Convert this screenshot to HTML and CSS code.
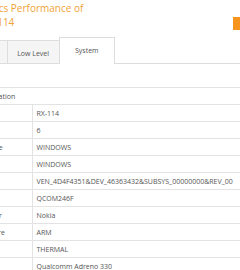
FILE: index.html
```html
<!DOCTYPE html>
<html lang="en">
<head>
<meta charset="UTF-8">
<meta name="viewport" content="width=device-width, initial-scale=1.0">
<title>RX-114 - System</title>
<link rel="stylesheet" href="styles.css">
</head>
<body>

<div class="page">
  <header class="top">
    <h1 class="title">
      <span class="title-line">Graphics Performance of</span>
      <span class="title-line second">RX-114</span>
    </h1>
    <a class="compare" href="#compare">Compare</a>
  </header>

  <nav class="tabs">
    <a class="tab" href="#high">High Level</a>
    <a class="tab" href="#low">Low Level</a>
    <a class="tab active" href="#system">System</a>
  </nav>

  <div class="panel">
    <table class="info">
      <tr class="head"><th colspan="2">Device Information</th></tr>
      <tr><td>Name</td><td>RX-114</td></tr>
      <tr><td>CPU cores</td><td>6</td></tr>
      <tr><td>Platform Type</td><td>WINDOWS</td></tr>
      <tr><td>OS</td><td>WINDOWS</td></tr>
      <tr><td>Device ID</td><td>VEN_4D4F4351&amp;DEV_46363432&amp;SUBSYS_00000000&amp;REV_00</td></tr>
      <tr><td>Model</td><td>QCOM246F</td></tr>
      <tr><td>Manufacturer</td><td>Nokia</td></tr>
      <tr><td>CPU Hardware</td><td>ARM</td></tr>
      <tr><td>Cooling</td><td>THERMAL</td></tr>
      <tr><td>GPU</td><td>Qualcomm Adreno 330</td></tr>
    </table>
  </div>
</div>

</body>
</html>
```

FILE: styles.css
```css
/* Basic reset */
* {
  margin: 0;
  padding: 0;
  box-sizing: border-box;
}

html,
body {
  overflow: hidden;
}

body {
  font-family: "Open Sans", Arial, sans-serif;
  font-size: 7px;
  color: #555;
  background: #fff;
}

/* Page is wider than the window and starts left of it */
.page {
  width: 344px;
  margin-left: -44px;
}

/* Title and compare button */
.top {
  display: flex;
  align-items: flex-start;
}

.title {
  font-size: 10px;
  font-weight: normal;
  line-height: 14px;
  color: #f0a236;
  padding: 1px 0 0 11px;
}

.title-line {
  display: block;
}

.title-line.second {
  padding-left: 15px;
}

.compare {
  margin-left: auto;
  margin-top: 17px;
  width: 67px;
  height: 13px;
  background: #f7941d;
  color: #fff;
  text-decoration: none;
  text-align: center;
  line-height: 13px;
}

/* Tabs */
.tabs {
  display: flex;
  align-items: flex-end;
  margin-top: 7px;
  margin-left: -3px;
  border-bottom: 1px solid #ddd;
}

.tab {
  display: block;
  height: 23px;
  padding: 3px 9.5px 0;
  line-height: 20px;
  border: 1px solid #ddd;
  border-bottom: 0;
  background: #f5f5f5;
  color: #555;
  text-decoration: none;
  margin-right: -1px;
}

.tab.active {
  height: 27px;
  padding: 0 15.5px;
  line-height: 26px;
  background: #fff;
  margin-bottom: -1px;
}

/* Table */
.panel {
  padding-top: 23px;
}

.info {
  width: 100%;
  border-collapse: collapse;
}

.info th,
.info td {
  height: 17px;
  padding: 0 4px;
  border-top: 1px solid #e3e3e3;
  text-align: left;
  font-weight: normal;
  white-space: nowrap;
}

.info th {
  padding-left: 0;
  text-indent: -3px;
}

.info td:first-child {
  width: 76px;
  padding-left: 1px;
  border-right: 1px solid #e3e3e3;
}
```
